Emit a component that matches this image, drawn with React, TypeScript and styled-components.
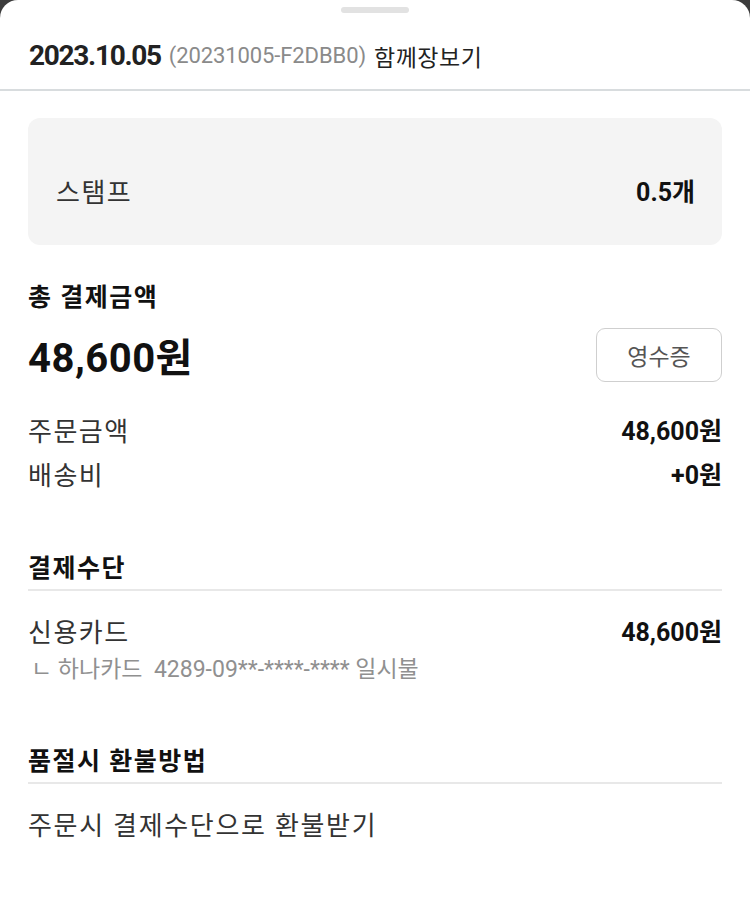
import React from "react";
import styled, { createGlobalStyle } from "styled-components";

const Global = createGlobalStyle`
  html, body { margin: 0; padding: 0; background: #3c3c3c; }
  body { font-family: Roboto, "Noto Sans CJK KR", sans-serif; }
  * { box-sizing: border-box; }
`;

const Sheet = styled.div`
  width: 750px;
  min-height: 921px;
  background: #fff;
  border-radius: 18px 18px 0 0;
  display: flex;
  flex-direction: column;
`;

const HandleWrap = styled.div`
  display: flex;
  justify-content: center;
  padding-top: 7px;
`;

const Handle = styled.div`
  width: 68px;
  height: 6px;
  border-radius: 3px;
  background: #e2e2e2;
`;

const Header = styled.div`
  display: flex;
  align-items: center;
  gap: 8px;
  height: 78px;
  padding: 9px 29px 0;
  border-bottom: 2px solid #d8dcde;
`;

const DateText = styled.span`
  font-size: 28px;
  font-weight: 700;
  color: #222;
  letter-spacing: -1.3px;
`;

const OrderNo = styled.span`
  font-size: 22px;
  color: #8a8a8a;
  letter-spacing: -0.1px;
`;

const Service = styled.span`
  font-size: 23px;
  color: #222;
  letter-spacing: 0.5px;
`;

const Body = styled.div`
  padding: 27px 28px 0;
  display: flex;
  flex-direction: column;
`;

const StampBox = styled.div`
  height: 127px;
  background: #f4f4f4;
  border-radius: 12px;
  display: flex;
  align-items: center;
  justify-content: space-between;
  padding: 22px 27px 0 28px;
`;

const Label = styled.span`
  font-size: 26px;
  line-height: 36px;
  color: #333;
  letter-spacing: 1.5px;
`;

const Value = styled.span`
  font-size: 25px;
  line-height: 36px;
  font-weight: 700;
  color: #111;
  letter-spacing: 0;
`;

const SectionTitle = styled.div<{ $divider?: boolean }>`
  font-size: 25px;
  line-height: 30px;
  font-weight: 700;
  color: #111;
  letter-spacing: 1.5px;
  padding-bottom: ${(p) => (p.$divider ? "5px" : "0")};
  border-bottom: ${(p) => (p.$divider ? "2px solid #e8e8e8" : "none")};
`;

const Section = styled.div<{ $top: number }>`
  margin-top: ${(p) => p.$top}px;
  display: flex;
  flex-direction: column;
`;

const TotalRow = styled.div`
  display: flex;
  align-items: center;
  justify-content: space-between;
  margin-top: 15px;
  height: 54px;
`;

const BigAmount = styled.span`
  font-size: 40px;
  font-weight: 700;
  color: #111;
  letter-spacing: 0.5px;
`;

const ReceiptButton = styled.button`
  width: 126px;
  height: 54px;
  border: 1px solid #cfcfcf;
  border-radius: 9px;
  background: #fff;
  font-family: inherit;
  font-size: 23px;
  color: #555;
  cursor: pointer;
`;

const Rows = styled.div<{ $top: number }>`
  display: flex;
  flex-direction: column;
  gap: 8px;
  margin-top: ${(p) => p.$top}px;
`;

const Row = styled.div`
  display: flex;
  align-items: center;
  justify-content: space-between;
  height: 36px;
`;

const SubLine = styled.div`
  font-size: 23px;
  line-height: 30px;
  color: #909090;
  margin-top: 4px;
  padding-left: 3px;
  letter-spacing: 0;
`;

const Plain = styled.div`
  font-size: 26px;
  line-height: 36px;
  color: #333;
  margin-top: 24px;
  letter-spacing: 1.7px;
`;

export default function App() {
  return (
    <>
      <Global />
      <Sheet>
        <HandleWrap>
          <Handle />
        </HandleWrap>
        <Header>
          <DateText>2023.10.05</DateText>
          <OrderNo>(20231005-F2DBB0)</OrderNo>
          <Service>함께장보기</Service>
        </Header>
        <Body>
          <StampBox>
            <Label>스탬프</Label>
            <Value>0.5개</Value>
          </StampBox>

          <Section $top={38}>
            <SectionTitle>총 결제금액</SectionTitle>
            <TotalRow>
              <BigAmount>48,600원</BigAmount>
              <ReceiptButton>영수증</ReceiptButton>
            </TotalRow>
          </Section>

          <Rows $top={32}>
            <Row>
              <Label>주문금액</Label>
              <Value>48,600원</Value>
            </Row>
            <Row>
              <Label>배송비</Label>
              <Value>+0원</Value>
            </Row>
          </Rows>

          <Section $top={60}>
            <SectionTitle $divider>결제수단</SectionTitle>
            <Rows $top={24}>
              <Row>
                <Label>신용카드</Label>
                <Value>48,600원</Value>
              </Row>
            </Rows>
            <SubLine>ㄴ 하나카드&nbsp; 4289-09**-****-**** 일시불</SubLine>
          </Section>

          <Section $top={62}>
            <SectionTitle $divider>품절시 환불방법</SectionTitle>
            <Plain>주문시 결제수단으로 환불받기</Plain>
          </Section>
        </Body>
      </Sheet>
    </>
  );
}
